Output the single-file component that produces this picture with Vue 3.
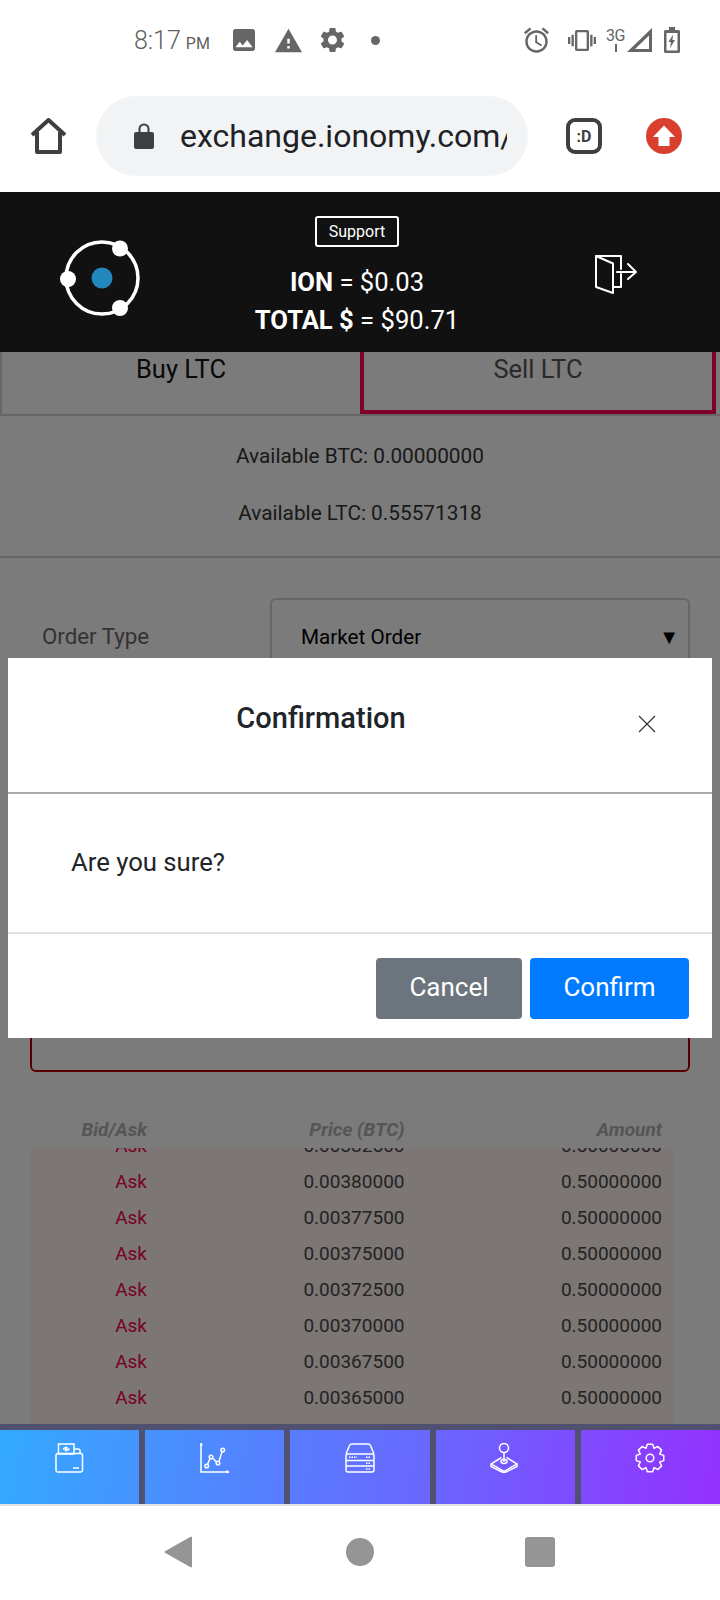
<template>
  <div class="phone">
    <!-- status bar -->
    <div class="status">
      <span class="clock">8:17<small>PM</small></span>
      <svg class="st st-img" viewBox="3 3 18 18"><path d="M21 19V5c0-1.1-.9-2-2-2H5c-1.1 0-2 .9-2 2v14c0 1.1.9 2 2 2h14c1.1 0 2-.9 2-2zM8.5 13.5l2.5 3.01L14.5 12l4.5 6H5l3.5-4.5z" /></svg>
      <svg class="st st-warn" viewBox="1 2 22 19"><path d="M1 21h22L12 2 1 21zm12-3h-2v-2h2v2zm0-4h-2v-4h2v4z" /></svg>
      <svg class="st st-gear" viewBox="2 2 20 20"><path :d="materialGear" /></svg>
      <span class="st-dot"></span>
      <svg class="st st-alarm" viewBox="2 1.8 20 20.2"><path d="M22 5.72l-4.6-3.86-1.29 1.53 4.6 3.86L22 5.72zM7.88 3.39L6.6 1.86 2 5.71l1.29 1.53 4.59-3.85zM12.5 8H11v6l4.75 2.85.75-1.23-4-2.37V8zM12 4c-4.97 0-9 4.03-9 9s4.03 9 9 9 9-4.03 9-9-4.03-9-9-9zm0 16c-3.87 0-7-3.13-7-7s3.13-7 7-7 7 3.13 7 7-3.13 7-7 7z" /></svg>
      <svg class="st st-vib" viewBox="0 3 24 18"><path d="M0 15h2V9H0v6zm3 2h2V7H3v10zm19-8v6h2V9h-2zm-3 8h2V7h-2v10zM16.5 3h-9C6.67 3 6 3.67 6 4.5v15c0 .83.67 1.5 1.5 1.5h9c.83 0 1.5-.67 1.5-1.5v-15c0-.83-.67-1.5-1.5-1.5zM16 19H8V5h8v14z" /></svg>
      <span class="net">3G<i></i></span>
      <svg class="st st-sig" viewBox="0 0 25 24"><path fill-rule="evenodd" d="M0 24L25 0v24zM8 21h14V7.500z" /></svg>
      <svg class="st st-bat" viewBox="0 0 16 26"><path fill-rule="evenodd" d="M5 0h6v3h3.500A1.500 1.500 0 0 1 16 4.500v20a1.500 1.500 0 0 1-1.500 1.500h-13A1.500 1.500 0 0 1 0 24.500v-20A1.500 1.500 0 0 1 1.500 3H5zM2.500 6v17.500h11V6zM9 7.500L4.500 15H7l-1 6 5-8H8.500z" /></svg>
    </div>

    <!-- browser toolbar -->
    <div class="toolbar">
      <svg class="home" viewBox="0 0 37 36" fill="none" stroke="#3c4043" stroke-width="4" stroke-linejoin="round"><path d="M2 17L18.500 2L35 17M7 14V34H30V14" /></svg>
      <div class="urlbar">
        <svg class="lock" viewBox="0 0 20 26"><path fill-rule="evenodd" d="M4.500 9V6a5.500 5.500 0 0 1 11 0v3H18a2 2 0 0 1 2 2v13a2 2 0 0 1-2 2H2a2 2 0 0 1-2-2V11a2 2 0 0 1 2-2zM6.500 9h7V6a3.500 3.500 0 0 0-7 0z" fill="#3c4043" /></svg>
        <span class="url">exchange.ionomy.com/</span>
      </div>
      <span class="tabs-count">:D</span>
      <svg class="update" viewBox="0 0 36 36"><circle cx="18" cy="18" r="18" fill="#d93f2f" /><path d="M18 7.500L29 19H23.500V28H12.500V19H7z" fill="#fff" /></svg>
    </div>

    <!-- site header -->
    <header class="site-head">
      <svg class="logo" viewBox="0 0 90 76" fill="none">
        <circle cx="46" cy="38" r="36" stroke="#fff" stroke-width="3.500" />
        <circle cx="46" cy="38" r="10.500" fill="#2288bb" />
        <circle cx="64" cy="8.500" r="8" fill="#fff" />
        <circle cx="12" cy="39" r="8" fill="#fff" />
        <circle cx="64" cy="68" r="8" fill="#fff" />
      </svg>
      <div class="head-mid">
        <button class="support" type="button">Support</button>
        <div class="rate"><b>ION</b> = $0.03</div>
        <div class="rate"><b>TOTAL $</b> = $90.71</div>
      </div>
      <svg class="exit" viewBox="0 0 43 40" fill="none" stroke="#fff" stroke-width="2" stroke-linecap="round" stroke-linejoin="round">
        <path d="M1 1H26V14M26 19V32H18" />
        <path d="M1 1L18 8.500V38L1 32Z" />
        <path d="M22 17H41M33 9L41 17L33 24" />
      </svg>
    </header>

    <!-- page behind the dialog -->
    <main class="main">
      <div class="trade-tabs">
        <div class="trade-tab">Buy LTC</div>
        <div class="trade-tab active">Sell LTC</div>
      </div>

      <div class="balances">
        <p>Available BTC: 0.00000000</p>
        <p>Available LTC: 0.55571318</p>
      </div>

      <div class="order-form">
        <div class="form-row">
          <label>Order Type</label>
          <div class="select">Market Order<span>▼</span></div>
        </div>
        <div class="submit-box"></div>
      </div>

      <div class="book-head book-grid">
        <span>Bid/Ask</span>
        <span>Price (BTC)</span>
        <span>Amount</span>
      </div>
      <div class="book">
        <div v-for="row in asks" :key="row.price" class="book-grid book-row">
          <span class="ask">Ask</span>
          <span>{{ row.price }}</span>
          <span>{{ row.amount }}</span>
        </div>
      </div>

      <div class="backdrop"></div>
      <div class="modal">
        <div class="modal-head">
          <h2>Confirmation</h2>
          <svg class="close" viewBox="0 0 18 18" fill="none" stroke="#333" stroke-width="1.200"><path d="M1 1L17 17M17 1L1 17" /></svg>
        </div>
        <div class="modal-body">Are you sure?</div>
        <div class="modal-foot">
          <button class="btn btn-grey" type="button">Cancel</button>
          <button class="btn btn-blue" type="button">Confirm</button>
        </div>
      </div>
    </main>

    <!-- app nav -->
    <nav class="app-nav">
      <div class="nav-item">
        <svg class="nav-ico" viewBox="0 0 30 30">
          <rect x="1" y="10.500" width="26.500" height="18.500" rx="2" />
          <rect x="3.500" y="1" width="15.500" height="10" />
          <path d="M19 6H23.500A1.500 1.500 0 0 1 25 7.500V10.500M18 25H24M8 6.500L9.500 5H13M14.500 5.500L13 7H9.500M11 3.500V8.500" />
        </svg>
      </div>
      <div class="nav-item">
        <svg class="nav-ico" viewBox="0 0 30 30">
          <path d="M1 0V29H29M1 0L0 3M1 0L2 3M29 29L26 28M29 29L26 30" />
          <path d="M7.500 21.500L10 15.500M12.500 15L16.500 19M19 18.500L22 8.500" />
          <circle cx="6.700" cy="23" r="1.800" />
          <circle cx="11" cy="14" r="1.800" />
          <circle cx="18" cy="20" r="1.800" />
          <circle cx="22.700" cy="7" r="1.800" />
        </svg>
      </div>
      <div class="nav-item">
        <svg class="nav-ico" viewBox="0 0 30 30">
          <path d="M1 11L4.500 2.500Q5 1 7 1H23Q25 1 25.500 2.500L29 11" />
          <rect x="1" y="11" width="28" height="18" rx="2" />
          <path d="M1 17.500H29M1 23H29" />
          <path class="dots" d="M4 14.300H12M21 14.300H26M21 20.300H26M21 26H26" />
        </svg>
      </div>
      <div class="nav-item">
        <svg class="nav-ico" viewBox="0 0 30 30">
          <circle cx="14" cy="5" r="4.500" />
          <path d="M14 9.500V19M11.500 14.500L1 21L14 28.500L27 21L16.500 14.500" />
          <ellipse cx="14" cy="18.500" rx="3" ry="2" />
          <path d="M1 21V23.500L14 30L27 23.500V21" />
        </svg>
      </div>
      <div class="nav-item">
        <svg class="nav-ico" viewBox="0 0 30 30">
          <path :d="outlineGear" stroke-linejoin="round" />
          <circle cx="15" cy="15" r="3.800" />
        </svg>
      </div>
    </nav>

    <!-- android nav -->
    <div class="android">
      <svg class="a-back" viewBox="0 0 28 32"><path d="M27 1.500V30.500L1.500 16Z" fill="#959595" stroke="#959595" stroke-width="2" stroke-linejoin="round" /></svg>
      <span class="a-home"></span>
      <span class="a-recent"></span>
    </div>
  </div>
</template>

<script setup>
const materialGear =
  "M19.14 12.94c.04-.3.06-.61.06-.94 0-.32-.02-.64-.07-.94l2.03-1.58c.18-.14.23-.41.12-.61l-1.92-3.32c-.12-.22-.37-.29-.59-.22l-2.39.96c-.5-.38-1.03-.7-1.62-.94l-.36-2.54c-.04-.24-.24-.41-.48-.41h-3.84c-.24 0-.43.17-.47.41l-.36 2.54c-.59.24-1.13.57-1.62.94l-2.39-.96c-.22-.08-.47 0-.59.22L2.74 8.87c-.12.21-.08.47.12.61l2.03 1.58c-.05.3-.09.63-.09.94s.02.64.07.94l-2.03 1.58c-.18.14-.23.41-.12.61l1.92 3.32c.12.22.37.29.59.22l2.39-.96c.5.38 1.03.7 1.62.94l.36 2.54c.05.24.24.41.48.41h3.84c.24 0 .44-.17.47-.41l.36-2.54c.59-.24 1.13-.56 1.62-.94l2.39.96c.22.08.47 0 .59-.22l1.92-3.32c.12-.22.07-.47-.12-.61l-2.01-1.58zM12 15.6c-1.98 0-3.6-1.62-3.6-3.6s1.62-3.6 3.6-3.6 3.6 1.62 3.6 3.6-1.62 3.6-3.6 3.6z";

const prices = [
  "0.00382500",
  "0.00380000",
  "0.00377500",
  "0.00375000",
  "0.00372500",
  "0.00370000",
  "0.00367500",
  "0.00365000",
];
const asks = prices.map((price) => ({ price, amount: "0.50000000" }));

// 8 tooth outline gear for the settings tab
const gearPoints = () => {
  const pts = [];
  const step = (Math.PI * 2) / 8;
  for (let i = 0; i < 8; i++) {
    const a = i * step - Math.PI / 2;
    [
      [-0.5, 10.5],
      [-0.24, 14],
      [0.24, 14],
      [0.5, 10.5],
    ].forEach(([o, r]) => {
      const t = a + o * step;
      pts.push((15 + r * Math.cos(t)).toFixed(2) + " " + (15 + r * Math.sin(t)).toFixed(2));
    });
  }
  return pts;
};
const outlineGear = "M" + gearPoints().join("L") + "Z";
</script>

<style scoped>
.phone {
  width: 720px;
  height: 1600px;
  display: flex;
  flex-direction: column;
  background: #fff;
  font-family: Roboto, "Liberation Sans", sans-serif;
  overflow: hidden;
}

/* status bar */
.status {
  height: 80px;
  display: flex;
  align-items: center;
  padding-left: 134px;
  color: #666;
}
.clock {
  width: 99px;
  font-size: 25px;
  font-weight: 300;
  color: #5f5f5f;
}
.clock small {
  font-size: 16px;
  margin-left: 5px;
  font-weight: 400;
}
.st {
  fill: #666;
  flex: none;
}
.st-img {
  width: 22px;
  height: 24px;
  margin-right: 20px;
}
.st-warn {
  width: 27px;
  height: 25px;
  margin-right: 18px;
}
.st-gear {
  width: 25px;
  height: 26px;
  margin-right: 26px;
}
.st-dot {
  width: 9px;
  height: 9px;
  border-radius: 50%;
  background: #666;
  margin-right: 144px;
}
.st-alarm {
  width: 25px;
  height: 26px;
  margin-right: 19px;
}
.st-vib {
  width: 28px;
  height: 21px;
  margin-right: 10px;
}
.net {
  position: relative;
  width: 19px;
  height: 26px;
  font-size: 16px;
  line-height: 17px;
  letter-spacing: -0.5px;
  color: #666;
}
.net i {
  position: absolute;
  left: 9px;
  top: 17px;
  width: 2px;
  height: 8px;
  background: #666;
}
.st-sig {
  width: 25px;
  height: 24px;
  margin: 0 12px 0 2px;
}
.st-bat {
  width: 16px;
  height: 26px;
}

/* browser toolbar */
.toolbar {
  height: 112px;
  display: flex;
  align-items: center;
  padding: 0 0 0 30px;
}
.home {
  width: 37px;
  height: 36px;
  margin-right: 29px;
}
.urlbar {
  width: 432px;
  height: 80px;
  border-radius: 40px;
  background: #f1f3f4;
  display: flex;
  align-items: center;
  padding: 0 21px 0 38px;
  box-sizing: border-box;
  margin-right: 38px;
}
.lock {
  width: 20px;
  height: 26px;
  flex: none;
  margin-right: 26px;
}
.url {
  flex: 1;
  overflow: hidden;
  white-space: nowrap;
  font-size: 32px;
  color: #202124;
}
.tabs-count {
  width: 36px;
  height: 36px;
  box-sizing: border-box;
  border: 4px solid #3c4043;
  border-radius: 9px;
  display: flex;
  align-items: center;
  justify-content: center;
  font-size: 16px;
  font-weight: 700;
  color: #3c4043;
  margin-right: 44px;
}
.update {
  width: 36px;
  height: 36px;
}

/* site header */
.site-head {
  height: 160px;
  background: #111;
  position: relative;
  display: flex;
  color: #fff;
  z-index: 2;
}
.logo {
  width: 90px;
  height: 76px;
  margin: 48px 0 0 56px;
  flex: none;
}
.head-mid {
  width: 300px;
  margin-left: 61px;
  display: flex;
  flex-direction: column;
  align-items: center;
  flex: none;
}
.support {
  margin-top: 24px;
  width: 84px;
  height: 31px;
  background: none;
  border: 2px solid #fff;
  border-radius: 3px;
  color: #fff;
  font: 400 16px Roboto, sans-serif;
  padding: 0;
  margin-bottom: 16px;
}
.rate {
  font-size: 25.6px;
  line-height: 38px;
}
.rate b {
  font-weight: 700;
}
.exit {
  width: 43px;
  height: 40px;
  margin: 63px 0 0 88px;
}

/* page behind the dialog */
.main {
  position: relative;
  height: 1072px;
  overflow: hidden;
  background: #f6f6f6;
  color: #212529;
}
.trade-tabs {
  display: flex;
  height: 62px;
  border-bottom: 2px solid #ccc;
}
.trade-tab {
  flex: none;
  width: 360px;
  box-sizing: border-box;
  font-size: 25.5px;
  line-height: 34px;
  text-align: center;
  border-left: 2px solid #ccc;
  border-bottom: 0;
  color: #111;
}
.trade-tab.active {
  width: 356px;
  border: 4px solid #f80050;
  border-top: 0;
  color: #555;
}
.balances {
  height: 142px;
  border-bottom: 2px solid #ccc;
  text-align: center;
  font-size: 20.8px;
  box-sizing: border-box;
  padding-top: 28px;
}
.balances p {
  margin: 0 0 33px;
  line-height: 24px;
  color: #333;
}
.order-form {
  padding: 40px 30px 0;
}
.form-row {
  display: flex;
  align-items: flex-start;
}
.form-row label {
  width: 240px;
  padding: 25px 0 0 12px;
  box-sizing: border-box;
  font-size: 22.3px;
  line-height: 26px;
  color: #666;
}
.select {
  flex: 1;
  height: 110px;
  border: 2px solid #ccc;
  border-radius: 6px;
  box-sizing: border-box;
  padding: 24px 0 0 29px;
  position: relative;
  font-size: 20.7px;
  line-height: 26px;
  color: #000;
}
.select span {
  position: absolute;
  right: 9px;
  top: 24px;
  font-size: 20px;
}
.submit-box {
  height: 170px;
  margin-top: 194px;
  border: 2px solid #b00000;
  border-radius: 6px;
  box-sizing: border-box;
}
.book-grid {
  display: grid;
  grid-template-columns: 117px 1fr 1fr;
  text-align: right;
  padding-right: 12px;
  margin: 0 46px 0 30px;
}
.book-head {
  margin-top: 44px;
  height: 32px;
  line-height: 28px;
  font-size: 19px;
  font-style: italic;
  font-weight: 700;
  color: #aaa;
}
.book {
  height: 276px;
  margin: 0 46px 0 30px;
  overflow: hidden;
  background: #f8ece8;
}
.book .book-grid {
  margin: 0;
}
.book-row {
  height: 36px;
  line-height: 36px;
  font-size: 19px;
  color: #484848;
  position: relative;
  top: -20px;
}
.ask {
  color: #f00050;
}

.backdrop {
  position: absolute;
  inset: 0;
  background: rgba(0, 0, 0, 0.5);
}
.modal {
  position: absolute;
  top: 306px;
  left: 8px;
  width: 704px;
  height: 380px;
  background: #fff;
  display: flex;
  flex-direction: column;
  color: #212529;
}
.modal-head {
  height: 136px;
  border-bottom: 2px solid #aaa;
  box-sizing: border-box;
  position: relative;
}
.modal-head h2 {
  margin: 42px 0 0;
  width: 626px;
  text-align: center;
  font-size: 29px;
  font-weight: 500;
  line-height: 36px;
}
.close {
  position: absolute;
  left: 630px;
  top: 57px;
  width: 18px;
  height: 18px;
}
.modal-body {
  height: 140px;
  box-sizing: border-box;
  padding: 54px 0 0 63px;
  border-bottom: 2px solid #dee2e6;
  font-size: 25.7px;
  line-height: 28px;
}
.modal-foot {
  display: flex;
  justify-content: flex-end;
  gap: 8px;
  padding: 24px 23px 0 0;
}
.btn {
  height: 61px;
  border: 0;
  border-radius: 4px;
  color: #fff;
  font: 400 26px Roboto, sans-serif;
  padding: 0 0 4px;
}
.btn-grey {
  width: 146px;
  background: #6c757d;
}
.btn-blue {
  width: 159px;
  background: #007bff;
}

/* app nav */
.app-nav {
  height: 80px;
  box-sizing: border-box;
  display: flex;
  border-top: 6px solid #505070;
  background: linear-gradient(100deg, #33aaff 0%, #6a66ff 60%, #9430ff 100%);
  background-origin: border-box;
  position: relative;
  z-index: 2;
}
.nav-item {
  flex: 1;
  display: flex;
  justify-content: center;
  padding-top: 13px;
  border-left: 6px solid #505070;
}
.nav-item:first-child {
  border-left: 0;
}
.nav-ico {
  width: 30px;
  height: 30px;
  fill: none;
  stroke: #fff;
  stroke-width: 1.500;
}
.dots {
  stroke-dasharray: 1.500 1;
}

/* android nav */
.android {
  flex: 1;
  position: relative;
  border-top: 2px solid #e2e2e2;
  display: flex;
  align-items: center;
  padding: 0 0 2px 164px;
}
.a-back {
  width: 28px;
  height: 32px;
  margin-right: 154px;
}
.a-home {
  width: 28px;
  height: 28px;
  border-radius: 50%;
  background: #959595;
  margin-right: 151px;
}
.a-recent {
  width: 30px;
  height: 30px;
  border-radius: 3px;
  background: #959595;
}
</style>

<style>
html,
body {
  margin: 0;
  background: #fff;
}
</style>
